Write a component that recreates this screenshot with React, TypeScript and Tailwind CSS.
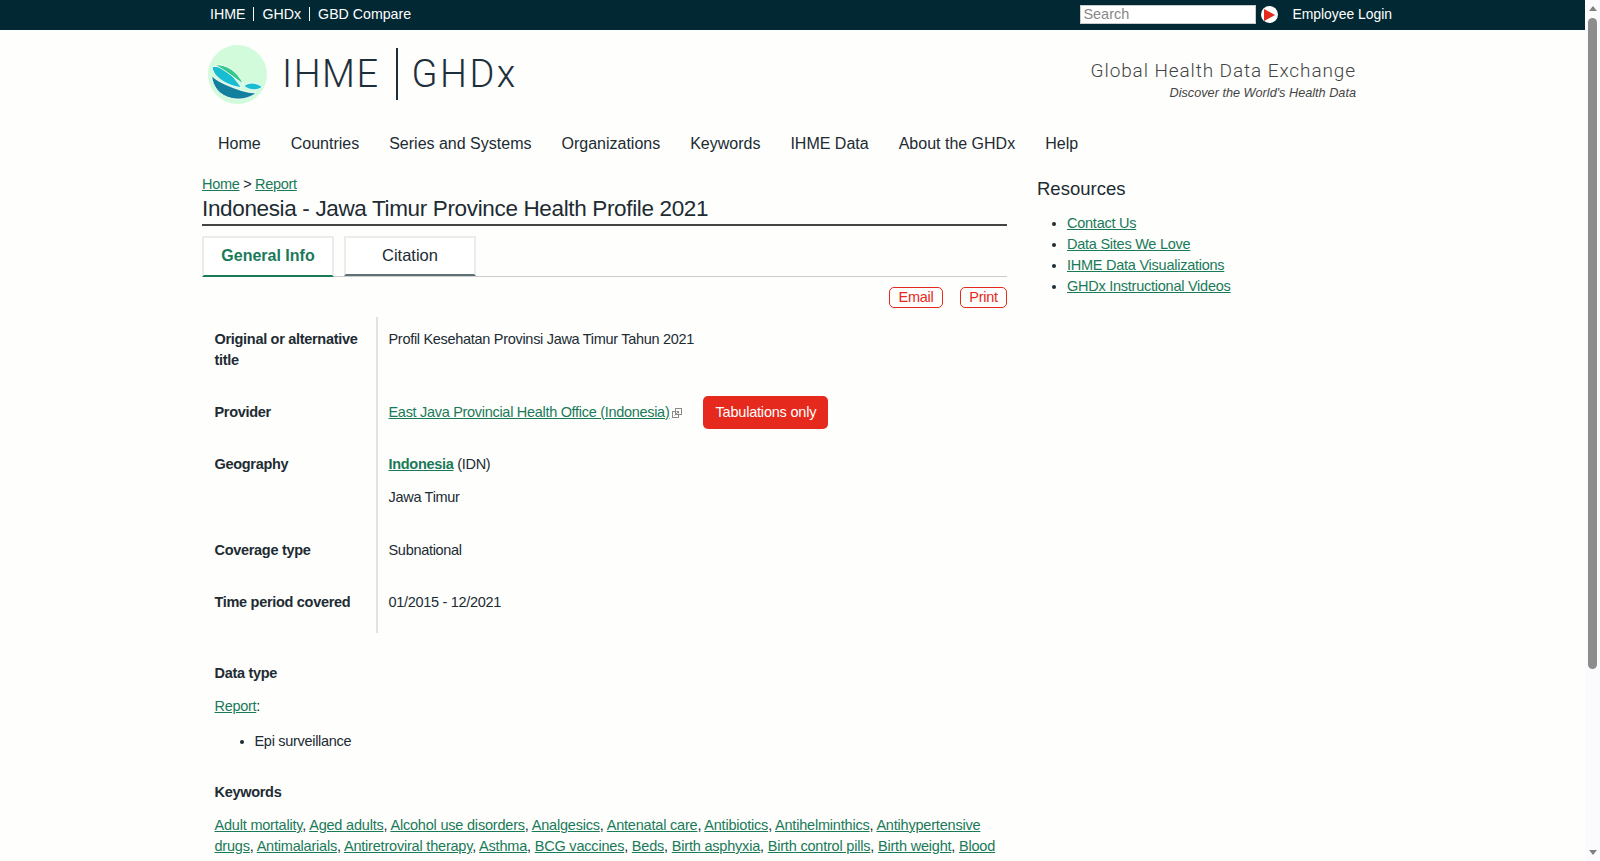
const navItems = ['Home', 'Countries', 'Series and Systems', 'Organizations', 'Keywords', 'IHME Data', 'About the GHDx', 'Help']

const resources = ['Contact Us', 'Data Sites We Love', 'IHME Data Visualizations', 'GHDx Instructional Videos']

const keywords = [
  'Adult mortality',
  'Aged adults',
  'Alcohol use disorders',
  'Analgesics',
  'Antenatal care',
  'Antibiotics',
  'Antihelminthics',
  'Antihypertensive drugs',
  'Antimalarials',
  'Antiretroviral therapy',
  'Asthma',
  'BCG vaccines',
  'Beds',
  'Birth asphyxia',
  'Birth control pills',
  'Birth weight',
  'Blood',
]

const A = ({ children, bold }: { children: string; bold?: boolean }) => (
  <a href="#" className={`text-[#1a7a58] underline ${bold ? 'font-bold' : ''}`}>
    {children}
  </a>
)

const LogoMark = () => (
  <svg width="59" height="59" viewBox="25 15 176 176" className="shrink-0">
    <circle cx="113" cy="103" r="88" fill="#d2fbdb" />
    <path d="M36 106 C50 122 75 132 100 142 C120 150 145 158 168 158 C150 174 120 180 95 174 C60 166 38 140 36 106Z" fill="#127f9c" stroke="#fff" strokeWidth="2.5" />
    <path d="M37 80 C55 76 70 84 85 95 C100 108 112 125 125 142 C100 140 72 128 55 112 C45 104 38 92 37 80Z" fill="#19bdd2" stroke="#fff" strokeWidth="2.5" />
    <path d="M45 74 C80 72 112 92 131 132 C110 118 80 92 45 74Z" fill="#34c98a" stroke="#fff" strokeWidth="2.5" />
    <path d="M132 137 C148 125 168 126 187 140 C172 152 150 152 132 137Z" fill="#19bdd2" stroke="#fff" strokeWidth="2.5" />
  </svg>
)

const ExternalIcon = () => (
  <svg width="10" height="10" viewBox="0 0 10 10" className="ml-[3px] inline-block align-[-1px]" fill="none" stroke="#8a8a8a" strokeWidth="1">
    <rect x="0.5" y="3.5" width="6" height="6" />
    <rect x="3.5" y="0.5" width="6" height="6" fill="#fefefd" />
    <path d="M2.5 7.5 L6.5 3.5 M4.5 3.5 H6.5 V5.5" />
  </svg>
)

const Row = ({ label, children, className }: { label: string; children: React.ReactNode; className: string }) => (
  <div className={`flex ${className}`}>
    <div className="w-[174px] shrink-0 pl-[12.5px] pr-[10px] font-bold">{label}</div>
    <div className="flex-1 pl-[12.5px]">{children}</div>
  </div>
)

export default function App() {
  return (
    <div className="flex h-screen overflow-hidden bg-[#fefefd] font-['Liberation_Sans',Arial,sans-serif] text-[14.5px] leading-[21px] tracking-[-0.3px] text-[#212b32]">
      <div className="min-w-0 flex-1">
        <div className="h-[30px] bg-[#022933] pb-[1px] text-[14px] tracking-normal text-white">
          <div className="ml-[202px] flex h-full w-[1190px] items-center justify-between">
            <div className="mb-[1px] flex items-center pl-[8px] text-[14.2px]">
              <a href="#" className="border-r border-white pr-[8px] leading-[14px]">IHME</a>
              <a href="#" className="border-r border-white px-[8px] leading-[14px]">GHDx</a>
              <a href="#" className="pl-[8px] leading-[14px]">GBD Compare</a>
            </div>
            <div className="flex items-center">
              <input
                placeholder="Search"
                className="h-[19px] w-[176px] border border-[#ccc] bg-white px-[2px] text-[14.5px] text-[#212b32] outline-none placeholder:text-[#888]"
              />
              <span className="ml-[5px] flex h-[17px] w-[17px] items-center justify-center rounded-full bg-white">
                <svg width="11" height="12" viewBox="0 0 11 12">
                  <path d="M0 0 L11 6 L0 12Z" fill="#e5291c" />
                </svg>
              </span>
              <a href="#" className="ml-[14px] text-[13.9px]">Employee Login</a>
            </div>
          </div>
        </div>

        <div className="ml-[202px] w-[1154px]">
          <header className="flex h-[90px] items-center justify-between tracking-normal">
            <div className="mb-[2px] flex items-center pl-[6px] font-['Roboto',sans-serif] text-[38px] font-light leading-none tracking-[1.5px] text-[#1d2f3a]">
              <LogoMark />
              <span className="ml-[15px]">IHME</span>
              <span className="ml-[16px] h-[52px] w-[2px] bg-[#1d2f3a]" />
              <span className="ml-[14px] tracking-[2.5px]">GHDx</span>
            </div>
            <div className="pt-[10px] text-right">
              <div className="font-['Roboto',sans-serif] text-[19px] font-light leading-[24px] tracking-[0.9px] text-[#444]">Global Health Data Exchange</div>
              <div className="mt-[1px] text-[12.7px] italic leading-[18px] text-[#444]">Discover the World's Health Data</div>
            </div>
          </header>

          <nav className="flex h-[46px] items-center pl-[16px] text-[16px] tracking-normal text-[#212b32]">
            {navItems.map(item => (
              <a key={item} href="#" className="mr-[30px]">{item}</a>
            ))}
          </nav>

          <div className="mt-[7px] flex">
            <main className="w-[805px] shrink-0">
              <div className="h-[21px] pt-[1px]">
                <A>Home</A> &gt; <A>Report</A>
              </div>
              <h1 className="h-[32px] border-b-2 border-[#444] pt-[1px] text-[22.5px] leading-[28px] tracking-[-0.35px]">Indonesia - Jawa Timur Province Health Profile 2021</h1>

              <div className="mt-[10px] flex h-[41px] gap-[10px] border-b border-[#ccc] text-[16px] tracking-normal">
                <a href="#" className="flex h-[41px] w-[132px] items-center justify-center border-x-2 border-t-2 border-b-2 border-x-[#ececec] border-t-[#ececec] border-b-[#1a7a58] bg-white pb-[2px] font-bold text-[#1a7a58]">General Info</a>
                <a href="#" className="flex h-[40px] w-[132px] items-center justify-center border-x-2 border-t-2 border-b-2 border-x-[#ececec] border-t-[#ececec] border-b-[#5f6f78] bg-white pb-[1px] text-[16.5px]">Citation</a>
              </div>

              <div className="mt-[10px] flex h-[21px] justify-end gap-[17px] text-[#e5291c]">
                <a href="#" className="flex w-[54px] items-center justify-center rounded-[5px] border border-[#e5291c]">Email</a>
                <a href="#" className="flex w-[47px] items-center justify-center rounded-[5px] border border-[#e5291c]">Print</a>
              </div>

              <div className="relative mt-[9px]">
                <div className="absolute bottom-0 left-[174px] top-0 w-[2px] bg-[#e2e2e2]" />
                <Row label="Original or alternative title" className="pb-[15.5px] pt-[11.5px]">
                  Profil Kesehatan Provinsi Jawa Timur Tahun 2021
                </Row>
                <Row label="Provider" className="h-[52px] items-center">
                  <div className="flex items-center">
                    <span><A>East Java Provincial Health Office (Indonesia)</A><ExternalIcon /></span>
                    <span className="ml-[21px] flex h-[33px] w-[125px] items-center justify-center rounded-[5px] bg-[#e5291c] tracking-[-0.2px] text-white">Tabulations only</span>
                  </div>
                </Row>
                <Row label="Geography" className="pb-[16.5px] pt-[15.5px]">
                  <p><A bold>Indonesia</A> (IDN)</p>
                  <p className="mt-[12px]">Jawa Timur</p>
                </Row>
                <Row label="Coverage type" className="h-[52px] items-center">Subnational</Row>
                <Row label="Time period covered" className="pb-[20.5px] pt-[15.5px]">01/2015 - 12/2021</Row>
              </div>

              <div className="pl-[12.5px] pt-[30px]">
                <div className="font-bold">Data type</div>
                <p className="mt-[12px]"><A>Report</A>:</p>
                <ul className="mt-[14px] list-disc pl-[40px]">
                  <li>Epi surveillance</li>
                </ul>
                <div className="mt-[30px] font-bold">Keywords</div>
                <p className="mt-[12px] w-[790px] tracking-[-0.2px]">
                  {keywords.map((k, i) => (
                    <span key={k}>
                      <A>{k}</A>
                      {i < keywords.length - 1 ? ', ' : ''}
                    </span>
                  ))}
                </p>
              </div>
            </main>

            <aside className="ml-[30px] flex-1 tracking-[-0.25px]">
              <h2 className="pt-[1px] text-[18.5px] leading-[30px] tracking-normal">Resources</h2>
              <ul className="mt-[9px] list-disc pl-[30px]">
                {resources.map(r => (
                  <li key={r}><A>{r}</A></li>
                ))}
              </ul>
            </aside>
          </div>
        </div>
      </div>

      <div className="flex w-[15px] shrink-0 flex-col items-center bg-[#fbfbfd]">
        <div className="mt-[6px] h-0 w-0 border-x-[4.5px] border-b-[5px] border-x-transparent border-b-[#808080]" />
        <div className="mt-[7px] h-[651px] w-[9px] rounded-full bg-[#8c8c8c]" />
        <div className="mb-[6px] mt-auto h-0 w-0 border-x-[4.5px] border-t-[5px] border-x-transparent border-t-[#808080]" />
      </div>
    </div>
  )
}
